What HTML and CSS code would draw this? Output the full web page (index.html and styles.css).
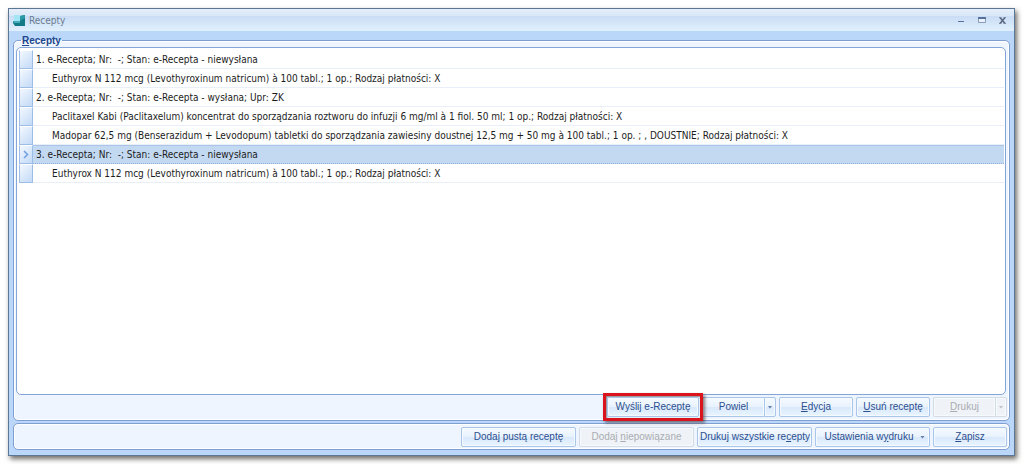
FILE: index.html
```html
<!DOCTYPE html>
<html lang="pl">
<head>
<meta charset="utf-8">
<title>Recepty</title>
<link rel="stylesheet" href="styles.css">
</head>
<body>
<main class="window">
  <header class="titlebar">
    <svg class="app-icon" width="13" height="13" viewBox="0 0 13 13" aria-hidden="true">
      <path d="M1 1h6v6H1z" fill="#a2e6f5"/>
      <path d="M7 2l5-1v11H2L0 9V7h7z" fill="#137a86"/>
      <path d="M7 2l5-1v3L7 7z" fill="#2a9aa6"/>
      <path d="M0 7h7v2H1z" fill="#42aebb"/>
    </svg>
    <h1 class="title">Recepty</h1>
    <div class="window-controls">
      <button class="window-button" type="button" aria-label="Minimalizuj"><svg width="9" height="9" viewBox="0 0 9 9"><path d="M2 5h6v1H2z" fill="#56719b"/></svg></button>
      <button class="window-button" type="button" aria-label="Maksymalizuj"><svg width="9" height="9" viewBox="0 0 9 9"><path d="M1.500 1.500h7v5h-7z" fill="#e9f2fc" stroke="#8a9cb8"/><path d="M1 1h8v2H1z" fill="#56719b"/></svg></button>
      <button class="window-button" type="button" aria-label="Zamknij"><svg width="9" height="9" viewBox="0 0 9 9"><path d="M2 1.500l5 6M7 1.500l-5 6" stroke="#56657d" stroke-width="1.500"/><path d="M1 1.500h2.500M5.500 1.500H8M1 7.500h2.500M5.500 7.500H8" stroke="#7a879c"/></svg></button>
    </div>
  </header>
  <section class="group" aria-labelledby="group-title">
    <h2 class="group-title" id="group-title"><u>R</u>ecepty</h2>
    <div class="list">
      <table class="grid">
        <tbody>
          <tr><th class="marker"></th><td class="cell">1. e-Recepta; Nr:&nbsp; -; Stan: e-Recepta - niewysłana</td></tr>
          <tr><th class="marker"></th><td class="cell drug">Euthyrox N 112 mcg (Levothyroxinum natricum) à 100 tabl.; 1 op.; Rodzaj płatności: X</td></tr>
          <tr><th class="marker"></th><td class="cell">2. e-Recepta; Nr:&nbsp; -; Stan: e-Recepta - wysłana; Upr: ZK</td></tr>
          <tr><th class="marker"></th><td class="cell drug">Paclitaxel Kabi (Paclitaxelum) koncentrat do sporządzania roztworu do infuzji 6 mg/ml à 1 fiol. 50 ml; 1 op.; Rodzaj płatności: X</td></tr>
          <tr><th class="marker"></th><td class="cell drug">Madopar 62,5 mg (Benserazidum + Levodopum) tabletki do sporządzania zawiesiny doustnej 12,5 mg + 50 mg à 100 tabl.; 1 op. ; , DOUSTNIE; Rodzaj płatności: X</td></tr>
          <tr class="selected"><th class="marker"><svg class="chevron" width="6" height="9" viewBox="0 0 6 9"><path d="M1 1l3.500 3.500L1 8" fill="none" stroke="#6f9fe0" stroke-width="1.500"/></svg></th><td class="cell">3. e-Recepta; Nr:&nbsp; -; Stan: e-Recepta - niewysłana</td></tr>
          <tr><th class="marker"></th><td class="cell drug">Euthyrox N 112 mcg (Levothyroxinum natricum) à 100 tabl.; 1 op.; Rodzaj płatności: X</td></tr>
        </tbody>
      </table>
    </div>
    <div class="actions">
      <span class="highlight"><button class="button send" type="button">Wyślij e-Receptę</button></span>
      <span class="split"><button class="button split-main" type="button">Powiel</button><button class="button split-arrow" type="button" aria-label="Powiel – opcje"><i class="arrow"></i></button></span>
      <button class="button small" type="button"><u>E</u>dycja</button>
      <button class="button small" type="button"><u>U</u>suń receptę</button>
      <span class="split"><button class="button split-main" type="button" disabled><u>D</u>rukuj</button><button class="button split-arrow" type="button" aria-label="Drukuj – opcje" disabled><i class="arrow"></i></button></span>
    </div>
  </section>
  <footer class="footer">
    <button class="button wide" type="button">Doda<u>j</u> pustą receptę</button>
    <button class="button wide" type="button" disabled>Dodaj <u>n</u>iepowiązane</button>
    <button class="button wide" type="button">Drukuj wszystkie re<u>c</u>epty</button>
    <button class="button wide menu" type="button"><span class="menu-label">Ustawienia w<u>y</u>druku</span><i class="arrow"></i></button>
    <button class="button small" type="button"><u>Z</u>apisz</button>
  </footer>
</main>
</body>
</html>
```
FILE: styles.css
```css
* {
  box-sizing: border-box;
}

body {
  margin: 0;
  padding: 8px 9px 8px 8px;
  background: #fff;
  font: 10px/14px "DejaVu Sans Condensed", "DejaVu Sans", sans-serif;
  color: #1c1c1c;
}

.window {
  display: flex;
  flex-direction: column;
  min-height: calc(100vh - 16px);
  padding: 0 4px 5px;
  border: 1px solid #5c7796;
  background: #bad6f8;
  box-shadow: 2px 3px 5px rgba(50, 45, 40, 0.7);
}

.titlebar {
  display: flex;
  align-items: center;
  gap: 3px;
  height: 22px;
  margin: 0 -4px;
  padding: 0 7px 0 4px;
  background: linear-gradient(#e5effa 0, #d9e7f8 30%, #c9dcf5 31%, #e0f0fd 100%);
}

.title {
  flex: 1;
  margin: 0;
  padding-top: 1px;
  font-size: 10px;
  font-weight: normal;
  color: #6d7c90;
}

.window-controls {
  display: flex;
  gap: 12px;
}

.window-button {
  display: flex;
  padding: 0;
  border: 0;
  background: none;
}

.group {
  display: flex;
  flex: 1;
  flex-direction: column;
  min-width: 0;
  margin-top: 9px;
  padding: 0 2px 3px;
  border: 1px solid #7f9fd2;
  border-radius: 5px;
  background: #eef5fe;
  box-shadow: inset 0 0 0 1px #fff;
}

.group-title {
  align-self: flex-start;
  margin: -8px 0 0 5px;
  padding: 1px 1px 0;
  background: linear-gradient(#bad6f8 50%, #eef5fe 50%);
  font: bold 10px/13px "Liberation Sans", Arial, sans-serif;
  color: #21468b;
}

.list {
  flex: 1;
  margin-right: 1px;
  padding: 2px 1px 2px 2px;
  border: 1px solid #84a5d8;
  border-radius: 5px;
  background: #fff;
}

.grid {
  width: 100%;
  border-spacing: 0;
}

.marker {
  width: 14px;
  height: 19px;
  padding: 0;
  border: 1px solid #9cbde5;
  border-top-color: #fff;
  background: linear-gradient(135deg, #f3f8ff, #c3daf6);
}

.chevron {
  display: block;
  margin: auto;
}

.cell {
  height: 19px;
  padding: 2px 3px 0;
  border-bottom: 1px solid #e8eff9;
  white-space: nowrap;
}

.drug {
  padding-left: 19px;
}

.selected .cell {
  border-bottom: 1px dotted #8fb0dc;
  background: #c3d9f1;
  box-shadow: inset 0 1px #a9c4e6;
}

.actions,
.footer {
  display: flex;
  justify-content: flex-end;
  gap: 3px;
}

.actions {
  padding-top: 2px;
}

.footer {
  margin-top: 2px;
  padding: 3px 2px 2px;
  border: 1px solid #7f9fd2;
  border-radius: 5px;
  background: #eef5fe;
  box-shadow: inset 0 0 0 1px #fff;
}

.button {
  height: 20px;
  padding: 0 2px;
  border: 1px solid #a9c5e9;
  border-radius: 2px;
  background: linear-gradient(#f5faff 0, #e9f2fd 48%, #d8e8fb 50%, #e9f4ff 100%);
  box-shadow: inset 0 0 0 1px #f5faff;
  font: 10px/16px "Liberation Sans", Arial, sans-serif;
  color: #2c4f8f;
  white-space: nowrap;
}

.button:disabled {
  border-color: #d5dbe3;
  background: #eff2f6;
  color: #a9adb3;
}

.small {
  width: 74px;
}

.wide {
  width: 115px;
}

.send {
  width: 92px;
}

.highlight {
  margin: -4px;
  padding: 1px;
  border: 3px solid #d9141c;
  box-shadow: 2px 2px 3px rgba(60, 40, 40, 0.6), inset 1px 1px 2px rgba(60, 40, 40, 0.6);
  z-index: 1;
}

.split {
  display: flex;
  width: 74px;
}

.split-main {
  flex: 1;
  border-right: 0;
  border-radius: 2px 0 0 2px;
}

.split-arrow {
  display: flex;
  align-items: center;
  justify-content: center;
  width: 12px;
  border-radius: 0 2px 2px 0;
}

.menu {
  display: flex;
  align-items: center;
  padding-right: 4px;
}

.menu-label {
  flex: 1;
}

.arrow {
  width: 5px;
  height: 3px;
  background: currentColor;
  opacity: 0.7;
  clip-path: polygon(0 0, 100% 0, 50% 100%);
}
```
